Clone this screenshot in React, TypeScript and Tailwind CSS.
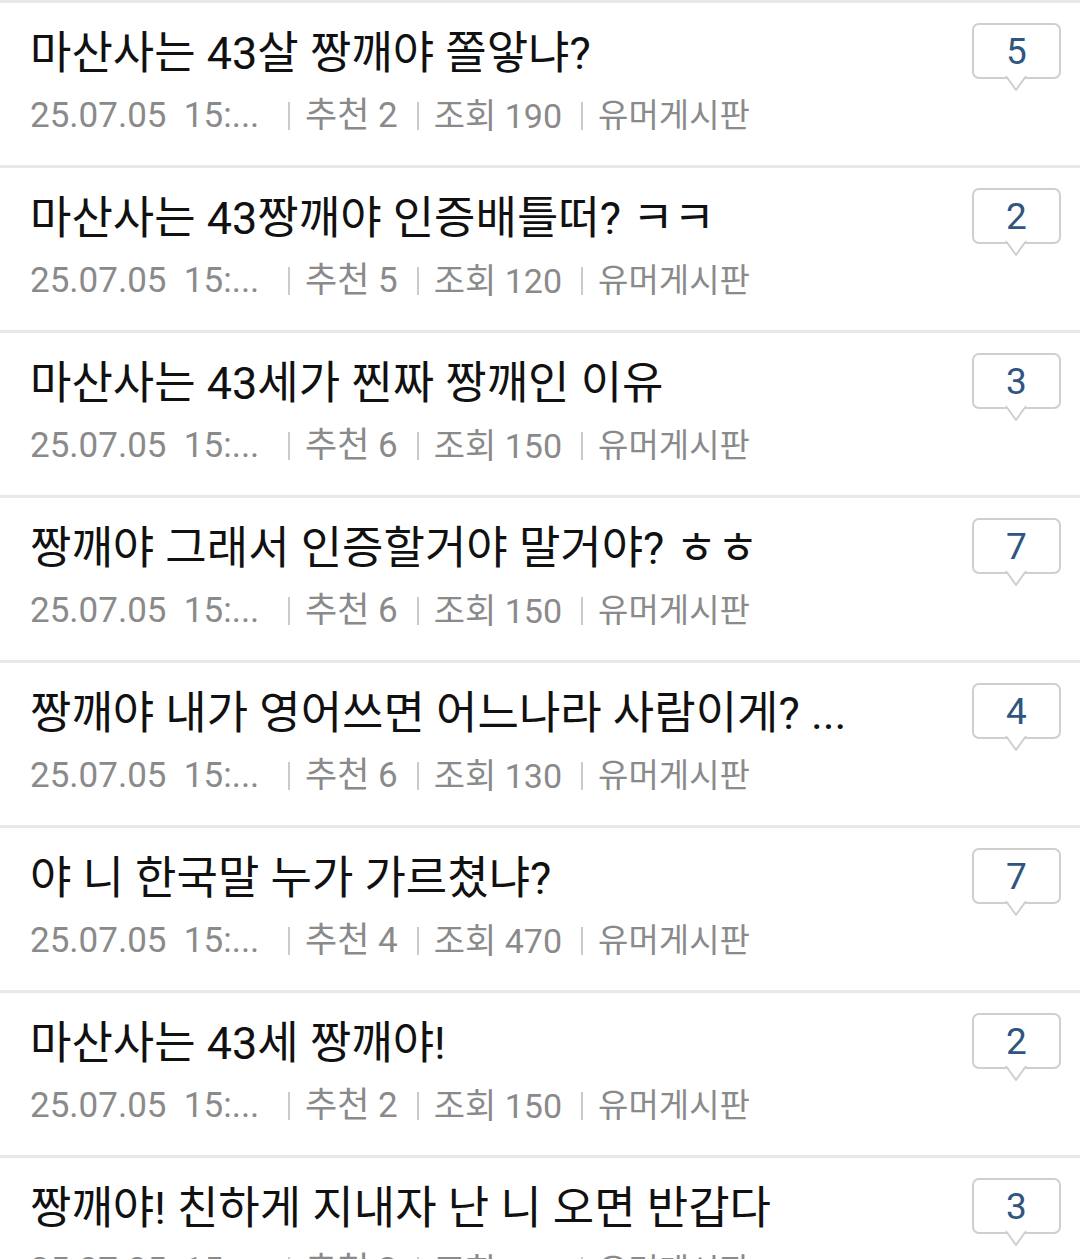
import React from 'react'

type Post = {
  title: string
  likes: number
  views: number
  comments: number
}

const posts: Post[] = [
  { title: '마산사는 43살 짱깨야 쫄앟냐?', likes: 2, views: 190, comments: 5 },
  { title: '마산사는 43짱깨야 인증배틀떠? ㅋㅋ', likes: 5, views: 120, comments: 2 },
  { title: '마산사는 43세가 찐짜 짱깨인 이유', likes: 6, views: 150, comments: 3 },
  { title: '짱깨야 그래서 인증할거야 말거야? ㅎㅎ', likes: 6, views: 150, comments: 7 },
  { title: '짱깨야 내가 영어쓰면 어느나라 사람이게? ...', likes: 6, views: 130, comments: 4 },
  { title: '야 니 한국말 누가 가르쳤냐?', likes: 4, views: 470, comments: 7 },
  { title: '마산사는 43세 짱깨야!', likes: 2, views: 150, comments: 2 },
  { title: '짱깨야! 친하게 지내자 난 니 오면 반갑다', likes: 3, views: 110, comments: 3 },
]

const CommentBubble = ({ count }: { count: number }) => (
  <div className="relative w-[89px] h-[56px] shrink-0">
    <div className="w-full h-full border-2 border-[#cfcfcf] rounded-[7px] bg-white flex items-center justify-center text-[37px] text-[#2f5580] leading-none">
      {count}
    </div>
    <svg className="absolute left-[33px] top-[52px]" width="22" height="17" viewBox="0 0 22 17">
      <path d="M1 1 L11 15 L21 1" fill="white" stroke="#cfcfcf" strokeWidth="2" strokeLinejoin="round" />
      <rect x="2" y="0" width="18" height="1.5" fill="white" />
    </svg>
  </div>
)

const Sep = () => <span className="ml-[19px] mr-[15px] w-[2px] h-[28px] bg-[#cbcbcb] inline-block" />

const App = () => {
  return (
    <div
      className="w-[1080px] bg-white border-t-[3px] border-[#e8e8e8] overflow-hidden"
      style={{ fontFamily: "Roboto, 'Noto Sans CJK KR', sans-serif" }}
    >
      {posts.map((p, i) => (
        <div key={i} className="h-[165px] border-b-[3px] border-[#e8e8e8] flex items-start pl-[30px] pr-[19px]">
          <div className="flex-1 min-w-0 pt-[25px]">
            <div className="text-[45px] leading-[52px] text-[#111] whitespace-nowrap">{p.title}</div>
            <div className="mt-[16px] flex items-center text-[35px] leading-[40px] text-[#8a8a8a] whitespace-nowrap">
              <span className="w-[239px] overflow-hidden">25.07.05&nbsp;&nbsp;15:...</span>
              <Sep />
              <span>추천 {p.likes}</span>
              <Sep />
              <span className="text-[34px]">조회 {p.views}</span>
              <Sep />
              <span className="text-[33px]">유머게시판</span>
            </div>
          </div>
          <div className="pt-[20px]">
            <CommentBubble count={p.comments} />
          </div>
        </div>
      ))}
    </div>
  )
}

export default App
